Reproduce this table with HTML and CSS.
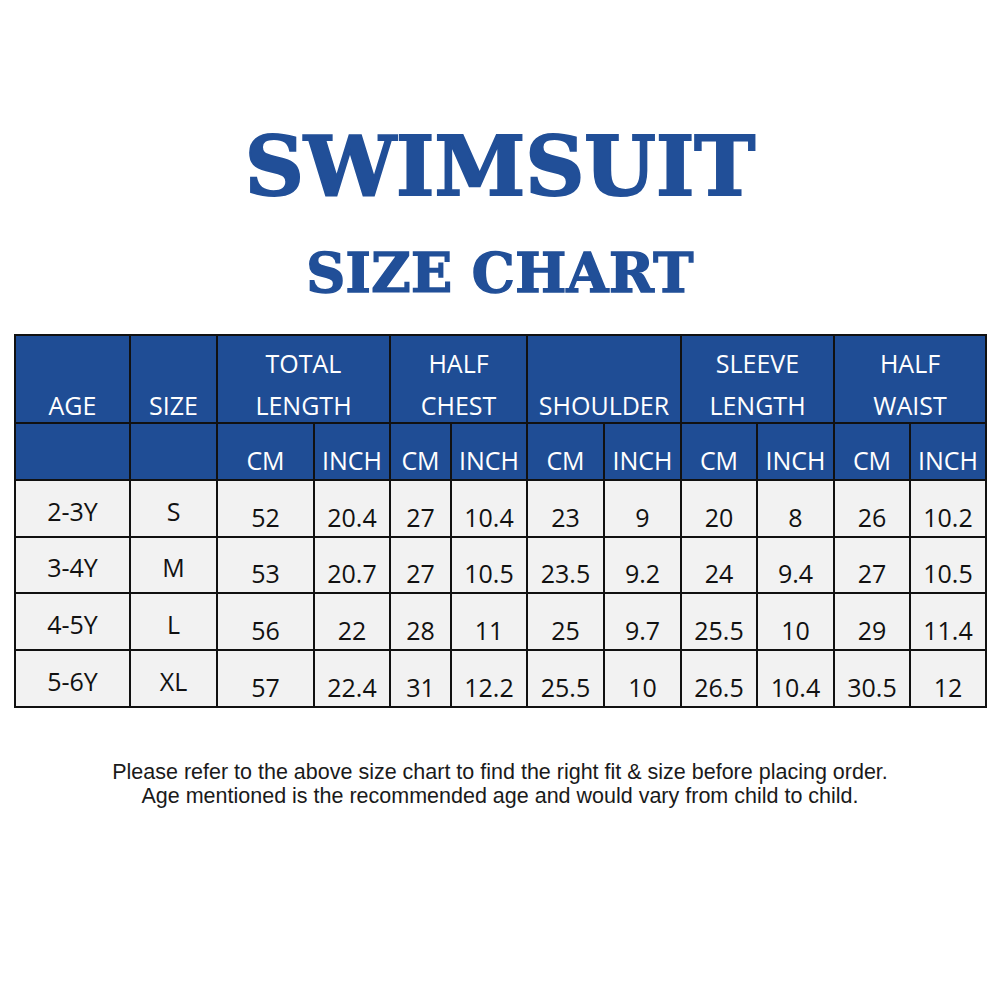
FILE: index.html
```html
<!DOCTYPE html>
<html lang="en">
<head>
<meta charset="utf-8">
<title>Swimsuit Size Chart</title>
<link rel="stylesheet" href="styles.css">
</head>
<body>
<main class="page">
  <h1 class="title">SWIMSUIT</h1>
  <h2 class="subtitle">SIZE CHART</h2>
  <div class="chart">
    <div class="cell head tall"><span>AGE</span></div>
    <div class="cell head tall"><span>SIZE</span></div>
    <div class="cell head tall span2"><span>TOTAL<br>LENGTH</span></div>
    <div class="cell head tall span2"><span>HALF<br>CHEST</span></div>
    <div class="cell head tall span2"><span>SHOULDER</span></div>
    <div class="cell head tall span2"><span>SLEEVE<br>LENGTH</span></div>
    <div class="cell head tall span2"><span>HALF<br>WAIST</span></div>

    <div class="cell head"></div>
    <div class="cell head"></div>
    <div class="cell head unit">CM</div><div class="cell head unit">INCH</div>
    <div class="cell head unit">CM</div><div class="cell head unit">INCH</div>
    <div class="cell head unit">CM</div><div class="cell head unit">INCH</div>
    <div class="cell head unit">CM</div><div class="cell head unit">INCH</div>
    <div class="cell head unit">CM</div><div class="cell head unit">INCH</div>

    <div class="cell label">2-3Y</div><div class="cell label">S</div>
    <div class="cell num">52</div><div class="cell num">20.4</div>
    <div class="cell num">27</div><div class="cell num">10.4</div>
    <div class="cell num">23</div><div class="cell num">9</div>
    <div class="cell num">20</div><div class="cell num">8</div>
    <div class="cell num">26</div><div class="cell num">10.2</div>

    <div class="cell label">3-4Y</div><div class="cell label">M</div>
    <div class="cell num">53</div><div class="cell num">20.7</div>
    <div class="cell num">27</div><div class="cell num">10.5</div>
    <div class="cell num">23.5</div><div class="cell num">9.2</div>
    <div class="cell num">24</div><div class="cell num">9.4</div>
    <div class="cell num">27</div><div class="cell num">10.5</div>

    <div class="cell label">4-5Y</div><div class="cell label">L</div>
    <div class="cell num">56</div><div class="cell num">22</div>
    <div class="cell num">28</div><div class="cell num">11</div>
    <div class="cell num">25</div><div class="cell num">9.7</div>
    <div class="cell num">25.5</div><div class="cell num">10</div>
    <div class="cell num">29</div><div class="cell num">11.4</div>

    <div class="cell label">5-6Y</div><div class="cell label">XL</div>
    <div class="cell num">57</div><div class="cell num">22.4</div>
    <div class="cell num">31</div><div class="cell num">12.2</div>
    <div class="cell num">25.5</div><div class="cell num">10</div>
    <div class="cell num">26.5</div><div class="cell num">10.4</div>
    <div class="cell num">30.5</div><div class="cell num">12</div>
  </div>
  <p class="note">Please refer to the above size chart to find the right fit &amp; size before placing order.<br>Age mentioned is the recommended age and would vary from child to child.</p>
</main>
</body>
</html>
```

FILE: styles.css
```css
html, body {
  margin: 0;
  padding: 0;
  background: #ffffff;
}

.page {
  width: 1000px;
  height: 1000px;
  display: flex;
  flex-direction: column;
  align-items: center;
  padding-top: 116px;
  box-sizing: border-box;
}

.title,
.subtitle {
  margin: 0;
  font-family: "DejaVu Serif", serif;
  font-weight: bold;
  color: #214f98;
  -webkit-text-stroke-color: #214f98;
  text-align: center;
}

.title {
  font-size: 82px;
  line-height: 100px;
  letter-spacing: 0px;
  -webkit-text-stroke-width: 2px;
}

.subtitle {
  margin-top: 22px;
  font-size: 54px;
  line-height: 70px;
  letter-spacing: 0.4px;
  -webkit-text-stroke-width: 1.5px;
}

.chart {
  margin-top: 26px;
  align-self: flex-start;
  margin-left: 14px;
  display: grid;
  grid-template-columns: 113px 85px 95px 74px 59px 74px 75px 75px 74px 75px 74px 74px;
  grid-template-rows: 86px 55px 55px 54px 55px 55px;
  gap: 2px;
  padding: 2px;
  background: #111111;
  font-family: "Open Sans", sans-serif;
  font-size: 25px;
}

.cell {
  display: flex;
  align-items: flex-end;
  justify-content: center;
  text-align: center;
  line-height: 30px;
  white-space: nowrap;
}

.span2 {
  grid-column: span 2;
}

.head {
  background: #1f4d95;
  color: #ffffff;
}

.tall {
  line-height: 42px;
}

.tall span {
  margin-bottom: -4px;
}

.unit {
  padding-bottom: 4px;
}

.label,
.num {
  background: #f2f2f2;
  color: #111111;
}

.num {
  padding-bottom: 4px;
}

.label {
  padding-bottom: 10px;
}

.note {
  margin: 52px 0 0;
  font-family: "Liberation Sans", Arial, sans-serif;
  font-size: 21.5px;
  line-height: 24px;
  color: #1a1a1a;
  text-align: center;
}
```
